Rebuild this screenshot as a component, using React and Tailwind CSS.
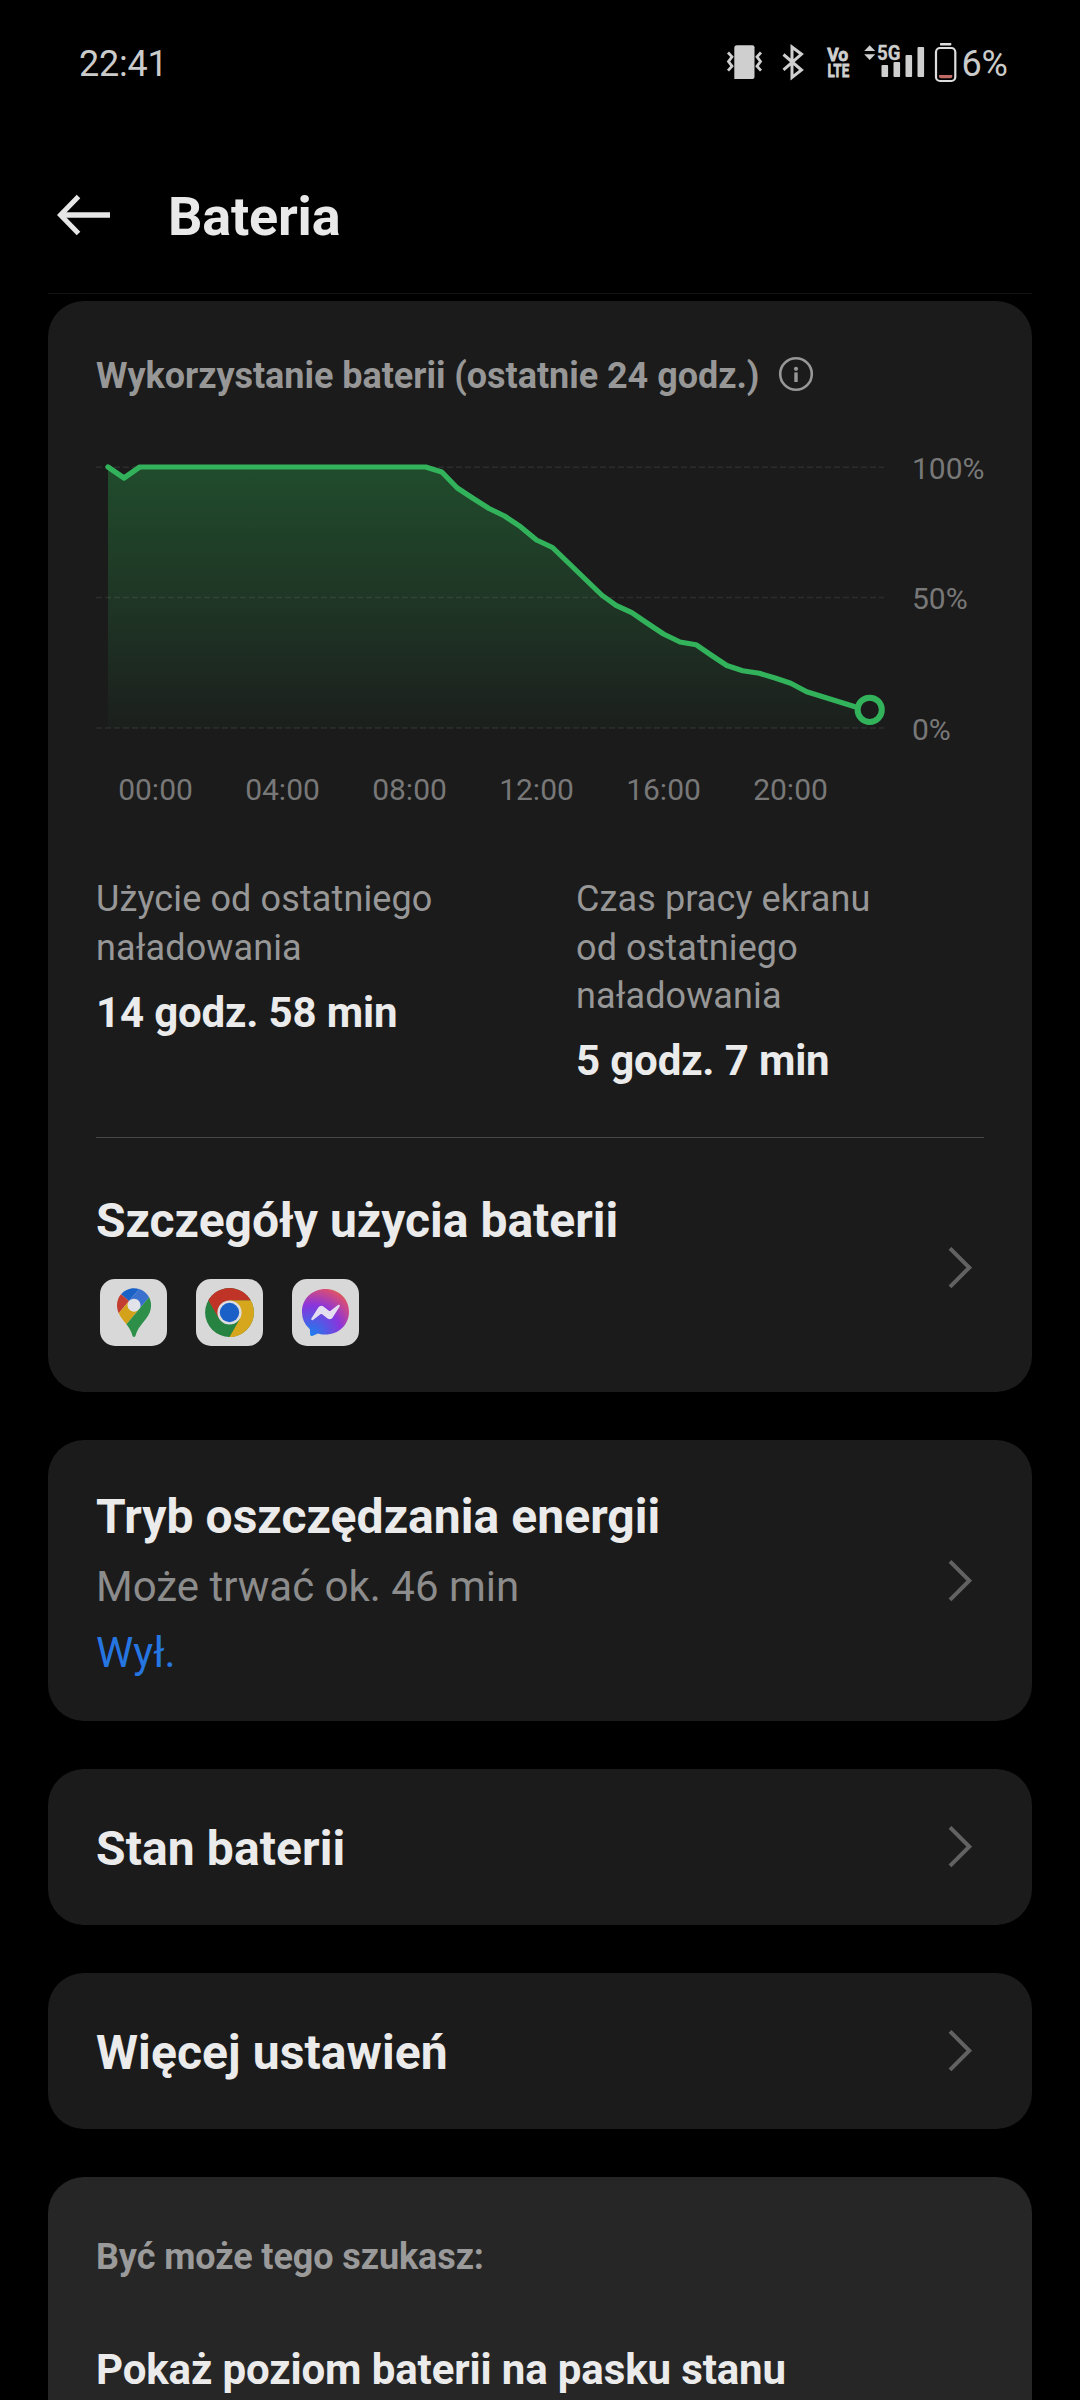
const LEVELS = [
  [108, 467], [124, 478], [139.7, 467], [425.7, 467], [441.8, 472], [457.3, 488],
  [472.5, 498], [489, 508.5], [504.5, 516], [520.5, 526.7], [536.5, 540], [552.5, 547.5],
  [601.7, 595], [616, 605.3], [631.8, 612.7], [647.7, 623.5], [663.5, 634], [680, 642],
  [696, 644.7], [711, 655], [726.8, 665.5], [742.7, 670.7], [759.3, 673.3], [775, 678],
  [790.7, 683.3], [806.7, 691.7], [855, 706.8], [869.7, 710],
];
const LINE = LEVELS.map((p) => p.join(",")).join(" ");
const AREA = `108,728 ${LINE} 869.7,728`;
const HOURS = ["00:00", "04:00", "08:00", "12:00", "16:00", "20:00"];

function Chevron() {
  return (
    <svg className="mr-3 h-[44px] w-[26px] shrink-0" viewBox="0 0 26 44" fill="none">
      <path d="M4 2.4 L23.2 21.6 L4 40.8" stroke="#626262" strokeWidth="4" />
    </svg>
  );
}

function StatusIcons() {
  return (
    <svg className="-mt-px h-[46px] w-[236px]" viewBox="724 40 236 46" fill="#cfcfcf" fontFamily="Roboto, sans-serif" fontWeight="700">
      <path d="M737 45.3h15.5a2 2 0 0 1 2 2V77a2 2 0 0 1-2 2H734.3V48a2.7 2.7 0 0 1 2.7-2.7z" />
      <g fill="none" stroke="#cfcfcf" strokeWidth="2.8">
        <path d="M728 52.5l4 4.3-3.5 4.7 3.5 4.7-4 4.4" />
        <path d="M761 52.5l-4 4.3 3.5 4.7-3.5 4.7 4 4.4" />
        <path d="M783.5 54.5L801.5 70L792 77.5V47L801.5 54.2L783.5 69.8" strokeWidth="3" />
      </g>
      <g stroke="#cfcfcf" strokeWidth="0.8">
        <text x="827.2" y="60.6" fontSize="19.2" textLength="21" lengthAdjust="spacingAndGlyphs">Vo</text>
        <text x="827.6" y="76.6" fontSize="19" textLength="21.6" lengthAdjust="spacingAndGlyphs">LTE</text>
        <text x="877" y="60" fontSize="20" strokeWidth="0.3" textLength="23.5" lengthAdjust="spacingAndGlyphs">5G</text>
      </g>
      <path d="M869.7 45.3l5.5 5.8h-11zM869.7 60l5.5-5.8h-11z" />
      <rect x="881.5" y="65" width="6.6" height="12" rx="1" />
      <rect x="893.5" y="62" width="6.6" height="15" rx="1" />
      <rect x="905.5" y="55" width="6.6" height="22" rx="1" />
      <rect x="917.5" y="47" width="6.6" height="30" rx="1" />
      <rect x="940" y="43" width="11.3" height="2.4" rx="0.6" fill="#dedede" />
      <rect x="936" y="48" width="19.3" height="33" rx="4" fill="none" stroke="#dedede" strokeWidth="2.2" />
      <path d="M939 75h13.3v1.4a1.8 1.8 0 0 1-1.8 1.8h-9.7a1.8 1.8 0 0 1-1.8-1.8z" fill="#c06a66" />
    </svg>
  );
}

function BatteryChart() {
  return (
    <svg className="h-[297px] w-[792px] shrink-0" viewBox="96 451 792 297" fill="none">
      <defs>
        <linearGradient id="level" x1="0" y1="467" x2="0" y2="728" gradientUnits="userSpaceOnUse">
          <stop offset="0" stopColor="#204c2c" />
          <stop offset="0.5" stopColor="#1f3625" />
          <stop offset="1" stopColor="#1b1f1d" />
        </linearGradient>
      </defs>
      <polygon points={AREA} fill="url(#level)" />
      <g stroke="#ffffff" strokeOpacity="0.08" strokeWidth="1.6" strokeDasharray="6 3">
        <path d="M96 467.2H884" />
        <path d="M96 597.5H884" />
        <path d="M96 728H884" />
      </g>
      <polyline points={LINE} stroke="#32b25b" strokeWidth="5.2" strokeLinejoin="round" strokeLinecap="round" />
      <circle cx="869.7" cy="709.8" r="12.1" fill="#1b1b1b" stroke="#32b25b" strokeWidth="6" />
    </svg>
  );
}

function AppTile({ children }) {
  return <div className="flex size-[67px] items-center justify-center rounded-[15px] bg-[#d8d8d8]">{children}</div>;
}

function MapsIcon() {
  return (
    <svg className="h-[49px] w-[34px]" viewBox="0 0 92.3 132.3">
      <circle cx="46.2" cy="46.2" r="20" fill="#e2e2ea" />
      <path fill="#1b62c6" d="M60.2 2.2C55.8.8 51 0 46.1 0 32 0 19.3 6.4 10.8 16.5l21.8 18.3L60.2 2.2z" />
      <path fill="#c43d31" d="M10.8 16.5C4.1 24.5 0 34.9 0 46.1c0 8.7 1.7 15.7 4.6 22l28-33.3-21.8-18.3z" />
      <path fill="#3a70cd" d="M46.2 28.5c9.8 0 17.7 7.9 17.7 17.7 0 4.3-1.6 8.3-4.2 11.4 0 0 13.9-16.6 27.5-32.7-5.6-10.8-15.3-19-27-22.7L32.6 34.8c3.3-3.8 8.1-6.3 13.6-6.3" />
      <path fill="#d4a21a" d="M46.2 63.8c-9.8 0-17.7-7.9-17.7-17.7 0-4.3 1.5-8.3 4.1-11.3l-28 33.3c4.8 10.6 12.8 19.2 21 29.9l34.1-40.5c-3.3 3.9-8.1 6.3-13.5 6.3" />
      <path fill="#2d8f48" d="M59.1 109.2c15.4-24.1 33.3-35 33.3-63 0-7.7-1.9-14.9-5.2-21.3L25.6 98c2.6 3.4 5.3 7.3 7.9 11.3 9.4 14.5 6.8 23.1 12.8 23.1s3.4-8.7 12.8-23.2" />
    </svg>
  );
}

function ChromeIcon() {
  return (
    <svg className="size-[49px]" viewBox="-24.5 -24.5 49 49">
      <circle r="24.4" fill="#278341" />
      <path fill="#d6a61c" d="M21.2-12.2A24.5 24.5 0 0 1 0 24.5L10.6 6.1 0-12.2z" />
      <path fill="#c03428" d="M-21.2-12.2A24.5 24.5 0 0 1 21.2-12.2H0L-10.6 6.1z" />
      <circle r="12.1" fill="#dedee2" />
      <circle r="9.7" fill="#1b60c6" />
    </svg>
  );
}

function MessengerIcon() {
  return (
    <svg className="size-[47px]" viewBox="0 0 24 24">
      <defs>
        <radialGradient id="bubble" cx="0.19" cy="0.99" r="1.09">
          <stop offset="0" stopColor="#1880ee" />
          <stop offset="0.6" stopColor="#8a35dc" />
          <stop offset="0.93" stopColor="#d54c7a" />
          <stop offset="1" stopColor="#d85f5c" />
        </radialGradient>
      </defs>
      <path d="M4 8h16v8H4z" fill="#e4dff0" />
      <path fill="url(#bubble)" d="M.001 11.639C.001 4.949 5.241 0 12.001 0S24 4.95 24 11.639c0 6.689-5.24 11.638-12 11.638-1.21 0-2.38-.16-3.47-.46a.96.96 0 00-.64.05l-2.39 1.05a.96.96 0 01-1.35-.85l-.07-2.14a.97.97 0 00-.32-.68A11.39 11.389 0 01.002 11.64zm8.32-2.19l-3.52 5.6c-.35.53.32 1.139.82.75l3.79-2.87c.26-.2.6-.2.87 0l2.8 2.1c.84.63 2.04.4 2.6-.48l3.52-5.6c.35-.53-.32-1.13-.82-.75l-3.79 2.87c-.25.2-.6.2-.86 0l-2.8-2.1a1.8 1.8 0 00-2.61.48z" />
    </svg>
  );
}

function LinkCard({ title }) {
  return (
    <section className="flex h-[156px] shrink-0 items-center justify-between rounded-[36px] bg-[#1b1b1b] px-12">
      <h2 className="pt-[3px] text-[48px] leading-[56px] font-bold tracking-[0.1px] text-[#ebebeb]">{title}</h2>
      <Chevron />
    </section>
  );
}

export default function App() {
  return (
    <div className="flex h-[2400px] w-[1080px] flex-col overflow-hidden bg-black font-['Roboto',sans-serif] text-[#ebebeb]">
      <div className="flex h-[127px] shrink-0 items-center justify-between pr-[72px] pl-[79px] text-[36px] text-[#cbcbcb]">
        <span className="tracking-[-0.2px]">22:41</span>
        <div className="flex items-center gap-px">
          <StatusIcons />
          <span>6%</span>
        </div>
      </div>

      <header className="flex h-[166px] shrink-0 items-center gap-[56px] pt-[13px] pl-[56px]">
        <svg className="-mt-[3px] h-[44px] w-[56px]" viewBox="0 0 56 44" fill="none" stroke="#e6e6e6">
          <path d="M5 22H54" strokeWidth="5.6" />
          <path d="M22.5 3.5L4.5 22l18 18.5" strokeWidth="5" />
        </svg>
        <h1 className="text-[54px] leading-[64px] font-bold tracking-[-0.2px] text-[#e9e9e9]">Bateria</h1>
      </header>
      <div className="mx-12 h-px shrink-0 bg-[#121212]" />

      <main className="mx-12 mt-[7px] flex flex-col gap-12">
        <section className="flex h-[1091px] shrink-0 flex-col rounded-[36px] bg-[#1b1b1b] px-12 pt-[51px]">
          <div className="flex h-12 items-center gap-[19px]">
            <h2 className="text-[36px] leading-[48px] font-bold tracking-[-0.04px] text-[#979797]">Wykorzystanie baterii (ostatnie 24 godz.)</h2>
            <svg className="-mt-1 size-[36px]" viewBox="0 0 36 36" fill="#979797">
              <circle cx="18" cy="18" r="15.8" fill="none" stroke="#979797" strokeWidth="2.6" />
              <circle cx="18" cy="12.8" r="2.1" />
              <rect x="16.3" y="16.4" width="3.4" height="9.6" />
            </svg>
          </div>

          <div className="mt-[51px] flex gap-6">
            <BatteryChart />
            <div className="flex flex-col justify-between text-[30px] leading-[36px] whitespace-nowrap text-[#787878]">
              <span>100%</span>
              <span className="-mt-px mb-px">50%</span>
              <span>0%</span>
            </div>
          </div>
          <div className="mt-6 -ml-1 grid w-[762px] grid-cols-6 text-center text-[30px] leading-[36px] text-[#787878]">
            {HOURS.map((h) => <span key={h}>{h}</span>)}
          </div>

          <div className="mt-[67px] grid h-[211px] grid-cols-[480px_1fr]">
            <div>
              <p className="w-[380px] text-[36px] leading-[48.5px] tracking-[0.12px] text-[#979797]">Użycie od ostatniego naładowania</p>
              <p className="mt-4 text-[42px] leading-[50px] font-bold tracking-[-0.15px]">14 godz. 58 min</p>
            </div>
            <div>
              <p className="w-[320px] text-[36px] leading-[48.5px] tracking-[0.1px] text-[#979797]">Czas pracy ekranu od ostatniego naładowania</p>
              <p className="mt-[15px] text-[42px] leading-[50px] font-bold tracking-[-0.15px]">5 godz. 7 min</p>
            </div>
          </div>
          <div className="mt-[51px] h-px bg-[#484848]" />

          <div className="flex items-center justify-between pt-[55px]">
            <div>
              <h2 className="text-[48px] leading-[56px] font-bold">Szczegóły użycia baterii</h2>
              <div className="mt-[30px] ml-1 flex gap-[29px]">
                <AppTile><MapsIcon /></AppTile>
                <AppTile><ChromeIcon /></AppTile>
                <AppTile><MessengerIcon /></AppTile>
              </div>
            </div>
            <div className="-mt-[3px]">
              <Chevron />
            </div>
          </div>
        </section>

        <section className="flex h-[281px] shrink-0 items-center justify-between rounded-[36px] bg-[#1b1b1b] px-12">
          <div className="pt-[6px]">
            <h2 className="text-[48px] leading-[56px] font-bold tracking-[0.05px]">Tryb oszczędzania energii</h2>
            <p className="mt-[17px] text-[42px] leading-[50px] text-[#8c8c8c]">Może trwać ok. 46 min</p>
            <p className="mt-4 text-[42px] leading-[50px] text-[#2676e2]">Wył.</p>
          </div>
          <Chevron />
        </section>

        <LinkCard title="Stan baterii" />
        <LinkCard title="Więcej ustawień" />

        <section className="h-[300px] shrink-0 rounded-[36px] bg-[#262626] px-12 pt-[56px]">
          <p className="text-[36px] leading-[48px] font-bold tracking-[-0.1px] text-[#9a9a9a]">Być może tego szukasz:</p>
          <h2 className="mt-[64px] text-[42px] leading-[50px] font-bold tracking-[-0.12px]">Pokaż poziom baterii na pasku stanu</h2>
        </section>
      </main>
    </div>
  );
}
